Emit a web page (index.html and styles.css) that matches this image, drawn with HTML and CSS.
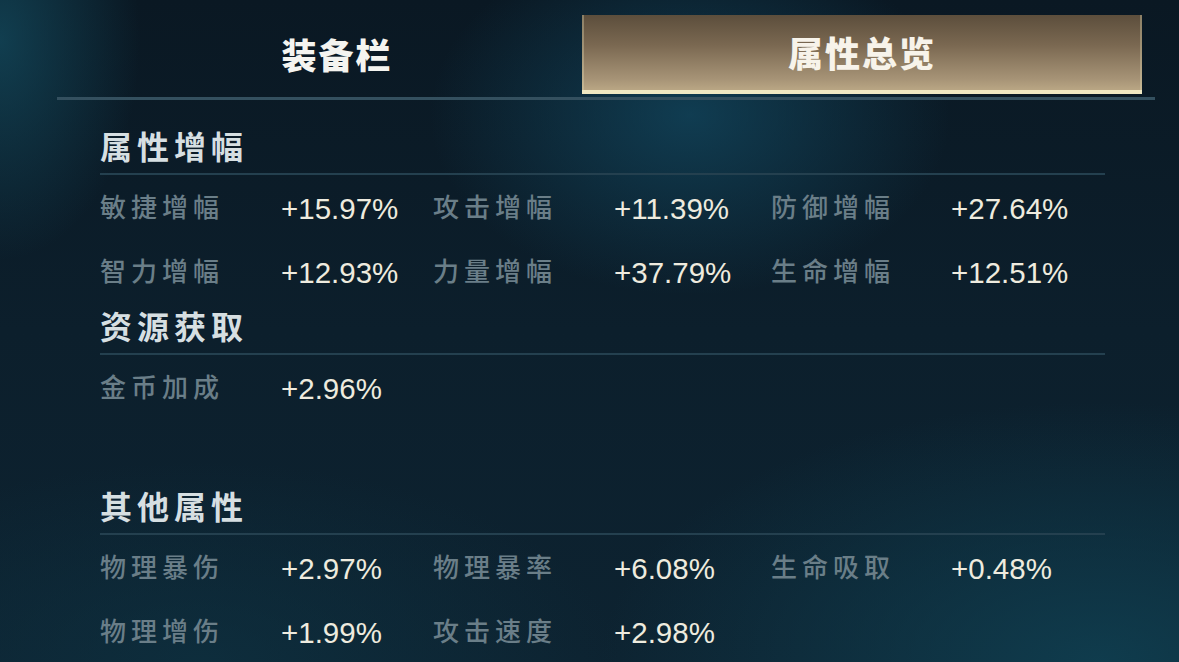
FILE: index.html
```html
<!DOCTYPE html>
<html lang="zh">
<head>
<meta charset="utf-8">
<title>属性总览</title>
<link rel="stylesheet" href="styles.css">
</head>
<body>
<div class="page">
  <nav class="tabs">
    <div class="tab">装备栏</div>
    <div class="tab tab-active">属性总览</div>
  </nav>
  <div class="divider"></div>

  <section class="section">
    <h2 class="heading">属性增幅</h2>
    <div class="grid">
      <span class="label">敏捷增幅</span><span class="value">+15.97%</span>
      <span class="label">攻击增幅</span><span class="value">+11.39%</span>
      <span class="label">防御增幅</span><span class="value">+27.64%</span>
      <span class="label">智力增幅</span><span class="value">+12.93%</span>
      <span class="label">力量增幅</span><span class="value">+37.79%</span>
      <span class="label">生命增幅</span><span class="value">+12.51%</span>
    </div>
  </section>

  <section class="section">
    <h2 class="heading">资源获取</h2>
    <div class="grid grid-tall">
      <span class="label">金币加成</span><span class="value">+2.96%</span>
    </div>
  </section>

  <section class="section">
    <h2 class="heading">其他属性</h2>
    <div class="grid">
      <span class="label">物理暴伤</span><span class="value">+2.97%</span>
      <span class="label">物理暴率</span><span class="value">+6.08%</span>
      <span class="label">生命吸取</span><span class="value">+0.48%</span>
      <span class="label">物理增伤</span><span class="value">+1.99%</span>
      <span class="label">攻击速度</span><span class="value">+2.98%</span>
    </div>
  </section>
</div>
</body>
</html>
```

FILE: styles.css
```css
* { box-sizing: border-box; }

html, body {
  margin: 0;
  padding: 0;
  height: 100%;
}

body {
  width: 1179px;
  height: 662px;
  overflow: hidden;
  font-family: "Noto Sans CJK SC", "Noto Sans", sans-serif;
  background-color: #0b1b27;
  background-image:
    radial-gradient(ellipse 260px 180px at 690px 115px, rgba(18, 72, 96, 0.75), rgba(18, 72, 96, 0) 100%),
    radial-gradient(ellipse 140px 220px at 0px 40px, rgba(20, 78, 98, 0.7), rgba(20, 78, 98, 0) 100%),
    radial-gradient(ellipse 500px 260px at 1100px 662px, rgba(16, 66, 84, 0.8), rgba(16, 66, 84, 0) 100%),
    radial-gradient(ellipse 420px 200px at 200px 662px, rgba(14, 52, 68, 0.6), rgba(14, 52, 68, 0) 100%),
    linear-gradient(180deg, #0a1823 0%, #0c1f2c 50%, #0d2331 100%);
}

.page {
  display: flex;
  flex-direction: column;
}

.tabs {
  display: grid;
  grid-template-columns: 490px 560px;
  padding: 15px 0 0 92px;
  height: 94px;
}

.tab {
  display: flex;
  align-items: center;
  justify-content: center;
  font-size: 35px;
  font-weight: 900;
  color: #f4f4f0;
  letter-spacing: 2px;
  padding-bottom: 2px;
}

.tab-active {
  background: linear-gradient(180deg, #5c4e3c 0%, #7a6851 40%, #a69376 85%, #b9a684 100%);
  border-bottom: 4px solid #f0e8c2;
  box-shadow: inset 2px 0 0 rgba(230, 220, 180, 0.35), inset -2px 0 0 rgba(230, 220, 180, 0.35);
  color: #f7f3ea;
}

.divider {
  margin: 3px 24px 0 57px;
  height: 3px;
  background: #34505f;
}

.section {
  margin-left: 100px;
  width: 1005px;
  margin-top: 6px;
}

.section:first-of-type {
  margin-top: 29px;
}

.heading {
  margin: 0;
  height: 46px;
  padding-bottom: 14px;
  font-size: 32px;
  line-height: 32px;
  font-weight: 700;
  letter-spacing: 5px;
  color: #d6dfe2;
  border-bottom: 2px solid #24404f;
}

.grid {
  display: grid;
  grid-template-columns: 181px 152px 181px 157px 180px 1fr;
  grid-auto-rows: 64px;
  align-items: center;
}

.grid-tall {
  min-height: 128px;
  align-content: start;
}

.label {
  font-size: 26px;
  letter-spacing: 5px;
  color: #6a7e88;
  font-weight: 500;
  padding-bottom: 4px;
}

.value {
  font-family: "Liberation Sans", Arial, sans-serif;
  font-size: 29.5px;
  color: #eeebdf;
  padding-top: 3px;
}
```
